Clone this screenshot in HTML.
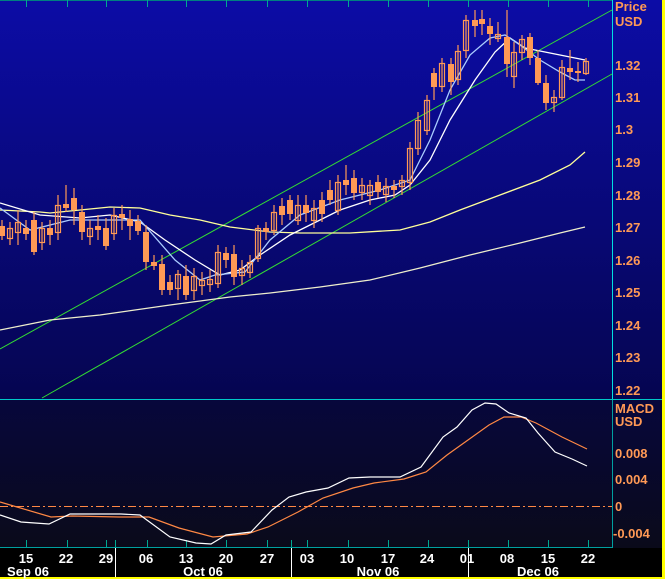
<!DOCTYPE html>
<html><head><meta charset="utf-8"><style>
html,body{margin:0;padding:0;background:#000;}
svg{display:block;}
text{font-family:"Liberation Sans",sans-serif;}
</style></head><body>
<svg width="665" height="579" viewBox="0 0 665 579" xmlns="http://www.w3.org/2000/svg">
<defs>
<linearGradient id="gp" x1="0" y1="0" x2="0" y2="1"><stop offset="0" stop-color="#0c0ca6"/><stop offset="1" stop-color="#050550"/></linearGradient>
<linearGradient id="gm" x1="0" y1="0" x2="0" y2="1"><stop offset="0" stop-color="#07073c"/><stop offset="1" stop-color="#0a0a1a"/></linearGradient>
</defs>
<rect x="0" y="0" width="665" height="579" fill="#000"/>
<rect x="0" y="0" width="662" height="399" fill="url(#gp)"/>
<rect x="0" y="399" width="662" height="149" fill="url(#gm)"/>
<rect x="662" y="0" width="3" height="579" fill="#ffff00"/>
<rect x="0" y="577" width="665" height="2" fill="#ffff00"/>
<line x1="612.5" y1="0" x2="612.5" y2="399" stroke="#00e0e0" stroke-width="1"/>
<line x1="612.5" y1="399" x2="612.5" y2="548" stroke="#00a0a0" stroke-width="1"/>
<line x1="0" y1="399.5" x2="662" y2="399.5" stroke="#00c8c8" stroke-width="1"/>
<line x1="0" y1="547.5" x2="612" y2="547.5" stroke="#00a0a0" stroke-width="1"/>
<line x1="0" y1="0.5" x2="612" y2="0.5" stroke="#008080"/>
<g stroke="#00a890" stroke-width="1">
<path d="M26.5 540V547M67.5 540V547M106.5 540V547M147.5 540V547M186.5 540V547M226.5 540V547M267.5 540V547M307.5 540V547M348.5 540V547M388.5 540V547M428.5 540V547M468.5 540V547M508.5 540V547M548.5 540V547M588.5 540V547M115.5 540V547M291.5 540V547"/>
<path d="M26.5 0V7M67.5 0V7M106.5 0V7M147.5 0V7M186.5 0V7M226.5 0V7M267.5 0V7M307.5 0V7M348.5 0V7M388.5 0V7M428.5 0V7M468.5 0V7M508.5 0V7M548.5 0V7M588.5 0V7"/>
</g>
<g stroke="#ffffff" stroke-width="1"><path d="M115.5 548V577M291.5 548V577M468.5 548V577"/></g>
<line x1="0" y1="349" x2="612" y2="10" stroke="#33dd33" stroke-width="1"/>
<line x1="42" y1="398" x2="612" y2="74" stroke="#33dd33" stroke-width="1"/>
<polyline fill="none" stroke="#ffff99" stroke-width="1.3" points="0,210 40,212 50,213 80,210 110,207 140,208 170,215 200,220 230,227 270,232 300,233 350,233 400,230 430,222 460,210 500,195 540,180 570,165 585,152"/>
<polyline fill="none" stroke="#eeeecc" stroke-width="1.3" points="0,330 50,320 100,315 170,305 230,297 270,293 320,287 370,280 420,268 470,255 520,243 560,233 585,227"/>
<polyline fill="none" stroke="#ffffff" stroke-width="1.3" points="0,203 40,215 80,218 110,215 140,222 165,240 195,260 220,275 240,270 260,255 290,235 310,225 340,210 370,200 395,195 410,185 430,160 450,120 475,80 495,52 510,38 525,48 545,52 560,55 585,60"/>
<polyline fill="none" stroke="#aaccff" stroke-width="1.3" points="0,208 30,230 70,220 140,220 175,260 200,280 215,275 245,272 270,240 300,215 340,200 380,190 410,180 430,140 450,90 470,55 490,38 505,35 520,45 540,60 560,72 575,80 585,80"/>
<g stroke="#ff9955" stroke-width="1.2">
<path d="M2 220V240M10 222V245M18 210V245M26 220V240M34 212V255M42 222V250M50 220V245M58 195V240M66 185V212M74 188V225M82 205V240M90 220V245M98 215V240M106 218V250M114 208V240M122 205V230M130 210V240M138 215V235M146 225V270M154 255V270M162 255V295M170 275V295M178 270V300M186 265V300M194 268V300M202 272V295M210 270V292M218 245V288M226 247V268M234 245V285M242 260V285M250 255V278M258 225V262M266 222V240M274 205V235M282 198V225M290 195V220M298 195V225M306 195V222M314 200V228M322 192V222M330 180V205M338 175V215M346 165V195M354 170V200M362 178V200M370 180V205M378 175V198M386 178V202M394 180V198M402 175V195M410 142V190M418 112V155M427 95V135M434 68V100M442 58V92M451 58V95M458 45V85M466 15V58M475 10V37M482 10V35M490 18V45M498 22V42M507 10V77M514 42V88M522 35V60M530 33V65M538 50V85M546 75V110M554 90V112M562 60V100M570 50V80M578 62V82M586 58V75"/>
</g>
<g fill="#ff9955">
<rect x="-1" y="226" width="6" height="10"/><rect x="23" y="228" width="6" height="6"/><rect x="31" y="220" width="6" height="32"/><rect x="47" y="228" width="6" height="7"/><rect x="63" y="204" width="6" height="4"/><rect x="71" y="198" width="6" height="12"/><rect x="79" y="212" width="6" height="20"/><rect x="95" y="226" width="6" height="4"/><rect x="103" y="228" width="6" height="18"/><rect x="119" y="214" width="6" height="4"/><rect x="127" y="219" width="6" height="7"/><rect x="135" y="221" width="6" height="10"/><rect x="143" y="232" width="6" height="30"/><rect x="151" y="262" width="6" height="4"/><rect x="159" y="264" width="6" height="26"/><rect x="167" y="282" width="6" height="8"/><rect x="183" y="276" width="6" height="19"/><rect x="223" y="253" width="6" height="7"/><rect x="231" y="254" width="6" height="23"/><rect x="263" y="228" width="6" height="4"/><rect x="279" y="206" width="6" height="9"/><rect x="287" y="200" width="6" height="14"/><rect x="303" y="205" width="6" height="8"/><rect x="319" y="200" width="6" height="14"/><rect x="327" y="190" width="6" height="10"/><rect x="343" y="180" width="6" height="5"/><rect x="351" y="178" width="6" height="15"/><rect x="375" y="182" width="6" height="10"/><rect x="391" y="186" width="6" height="4"/><rect x="431" y="73" width="6" height="14"/><rect x="448" y="64" width="6" height="18"/><rect x="472" y="20" width="6" height="6"/><rect x="479" y="19" width="6" height="5"/><rect x="487" y="26" width="6" height="8"/><rect x="504" y="37" width="6" height="27"/><rect x="527" y="37" width="6" height="21"/><rect x="535" y="58" width="6" height="25"/><rect x="543" y="83" width="6" height="20"/><rect x="567" y="68" width="6" height="4"/><rect x="575" y="71" width="6" height="2"/>
</g>
<g fill="none" stroke="#ff9955" stroke-width="1.2">
<rect x="7.5" y="228.5" width="5" height="10"/><rect x="15.5" y="222.5" width="5" height="10"/><rect x="39.5" y="228.5" width="5" height="14"/><rect x="55.5" y="205.5" width="5" height="27"/><rect x="87.5" y="228.5" width="5" height="8"/><rect x="111.5" y="215.5" width="5" height="18"/><rect x="175.5" y="274.5" width="5" height="14"/><rect x="191.5" y="276.5" width="5" height="14"/><rect x="199.5" y="280.5" width="5" height="5"/><rect x="207.5" y="279.5" width="5" height="5"/><rect x="215.5" y="252.5" width="5" height="31"/><rect x="239.5" y="268.5" width="5" height="7"/><rect x="247.5" y="262.5" width="5" height="10"/><rect x="255.5" y="228.5" width="5" height="30"/><rect x="271.5" y="212.5" width="5" height="18"/><rect x="295.5" y="205.5" width="5" height="15"/><rect x="311.5" y="208.5" width="5" height="12"/><rect x="335.5" y="182.5" width="5" height="28"/><rect x="359.5" y="185.5" width="5" height="7"/><rect x="367.5" y="185.5" width="5" height="10"/><rect x="383.5" y="186.5" width="5" height="8"/><rect x="399.5" y="180.5" width="5" height="6"/><rect x="407.5" y="148.5" width="5" height="34"/><rect x="415.5" y="120.5" width="5" height="28"/><rect x="424.5" y="100.5" width="5" height="30"/><rect x="439.5" y="63.5" width="5" height="23"/><rect x="455.5" y="51.5" width="5" height="28"/><rect x="463.5" y="20.5" width="5" height="30"/><rect x="495.5" y="34.5" width="5" height="4"/><rect x="511.5" y="52.5" width="5" height="24"/><rect x="519.5" y="39.5" width="5" height="13"/><rect x="551.5" y="97.5" width="5" height="5"/><rect x="559.5" y="67.5" width="5" height="30"/><rect x="583.5" y="61.5" width="5" height="12"/>
</g>
<line x1="0" y1="506.5" x2="612" y2="506.5" stroke="#ff8844" stroke-width="1" stroke-dasharray="8,3,2,3"/>
<polyline fill="none" stroke="#ff8844" stroke-width="1.2" points="0,502 17,507 51,517 72,516 119,517 149,517 179,528 213,537 247,534 268,527 298,512 323,498 353,488 374,483 404,479 426,472 447,455 468,440 489,425 504,417 521,417 536,423 562,437 587,449"/>
<polyline fill="none" stroke="#ffffff" stroke-width="1.2" points="0,515 21,522 49,524 70,514 121,514 140,515 170,537 196,543 211,544 226,535 251,532 272,510 289,497 306,492 328,488 349,478 370,477 400,477 421,467 443,437 457,427 472,410 485,403 496,404 509,413 526,418 538,433 555,452 572,459 587,466"/>
<g fill="#ff9955" font-size="13" font-weight="bold">
<text x="615" y="11">Price</text><text x="615" y="26">USD</text>
<text x="615" y="70">1.32</text><text x="615" y="102">1.31</text><text x="615" y="134">1.3</text><text x="615" y="167">1.29</text><text x="615" y="200">1.28</text><text x="615" y="232">1.27</text><text x="615" y="265">1.26</text><text x="615" y="297">1.25</text><text x="615" y="330">1.24</text><text x="615" y="362">1.23</text><text x="615" y="395">1.22</text>
<text x="615" y="413">MACD</text><text x="615" y="426">USD</text>
<text x="615" y="458">0.008</text><text x="615" y="484">0.004</text><text x="615" y="511">0</text><text x="613" y="538">-0.004</text>
</g>
<g fill="#ffffff" font-size="13" font-weight="bold" text-anchor="middle">
<text x="26" y="563">15</text><text x="66" y="563">22</text><text x="106" y="563">29</text><text x="146" y="563">06</text><text x="186" y="563">13</text><text x="226" y="563">20</text><text x="267" y="563">27</text><text x="307" y="563">03</text><text x="347" y="563">10</text><text x="388" y="563">17</text><text x="427" y="563">24</text><text x="467" y="563">01</text><text x="507" y="563">08</text><text x="548" y="563">15</text><text x="588" y="563">22</text>
<text x="28" y="576">Sep 06</text><text x="203" y="576">Oct 06</text><text x="378" y="576">Nov 06</text><text x="538" y="576">Dec 06</text>
</g>
</svg>
</body></html>
